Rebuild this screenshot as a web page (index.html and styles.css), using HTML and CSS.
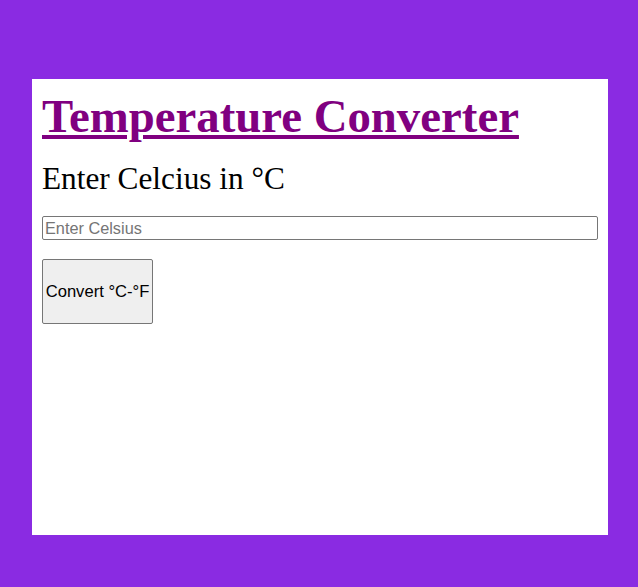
FILE: index.html
```html
<!DOCTYPE html>
<html>
<head>
<meta charset="utf-8">
<title>Temperature Converter</title>
<link rel="stylesheet" href="styles.css">
</head>
<body>
<div class="card">
  <h1 class="title">Temperature Converter</h1>
  <h2 class="label">Enter Celcius in °C</h2>
  <input class="field" type="text" placeholder="Enter Celsius">
  <div class="actions">
    <button class="convert">Convert °C-°F</button>
  </div>
</div>
</body>
</html>
```
FILE: styles.css
```css
html, body {
  margin: 0;
  padding: 0;
  background: #8a2be2;
  height: 100%;
}
body {
  padding-top: 79px;
  box-sizing: border-box;
}
.card {
  margin-left: 32px;
  width: 576px;
  height: 456px;
  box-sizing: border-box;
  padding: 10px;
  background: #ffffff;
  font-family: "Liberation Serif", "Times New Roman", serif;
}
.title {
  margin: 0;
  font-size: 46.8px;
  font-weight: bold;
  color: #800080;
  text-decoration: underline;
}
.label {
  margin: 18px 0 19px;
  font-size: 31.3px;
  font-weight: normal;
  color: #000;
}
.field {
  display: block;
  width: 100%;
  box-sizing: border-box;
  height: 24px;
  margin: 0;
  padding: 1px 2px;
  font-family: "Liberation Sans", Arial, sans-serif;
  font-size: 16.3px;
  border: 1px solid #767676;
  border-radius: 2px;
}
.field::placeholder {
  color: #757575;
}
.actions {
  margin-top: 19px;
}
.convert {
  width: 111px;
  height: 65px;
  padding: 0;
  font-family: "Liberation Sans", Arial, sans-serif;
  font-size: 16.6px;
  color: #000;
  background: #efefef;
  border: 1px solid #767676;
  border-radius: 2px;
}
```
